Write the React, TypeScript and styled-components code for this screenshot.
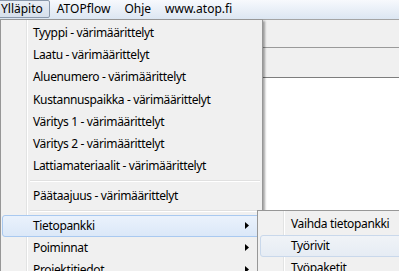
import styled, { createGlobalStyle } from 'styled-components';

const GlobalStyle = createGlobalStyle`
  html, body {
    margin: 0;
    padding: 0;
    background: #ffffff;
  }
  body {
    font-family: 'Noto Sans', 'DejaVu Sans', sans-serif;
    font-size: 12px;
    letter-spacing: -0.35px;
    color: #000;
  }
`;

type MenuEntry = { label?: string; sep?: boolean; sub?: boolean; active?: boolean };

const mainItems: MenuEntry[] = [
  { label: 'Tyyppi - värimäärittelyt' },
  { label: 'Laatu - värimäärittelyt' },
  { label: 'Aluenumero - värimäärittelyt' },
  { label: 'Kustannuspaikka - värimäärittelyt' },
  { label: 'Väritys 1 - värimäärittelyt' },
  { label: 'Väritys 2 - värimäärittelyt' },
  { label: 'Lattiamateriaalit - värimäärittelyt' },
  { sep: true },
  { label: 'Päätaajuus - värimäärittelyt' },
  { sep: true },
  { label: 'Tietopankki', sub: true, active: true },
  { label: 'Poiminnat', sub: true },
  { label: 'Projektitiedot', sub: true },
];

const subItems: MenuEntry[] = [
  { label: 'Vaihda tietopankki' },
  { label: 'Työrivit', active: true },
  { label: 'Työpaketit' },
];

const barItems = ['Ylläpito', 'ATOPflow', 'Ohje', 'www.atop.fi'];

const Arrow = () => (
  <svg width="4" height="7" viewBox="0 0 4 7">
    <polygon points="0,0 4,3.5 0,7" fill="#000" />
  </svg>
);

export default function App() {
  return (
    <Screen>
      <GlobalStyle />
      <MenuBar>
        {barItems.map((b, i) => (
          <BarItem key={b} $pressed={i === 0}>
            {b}
          </BarItem>
        ))}
      </MenuBar>
      <Band $h={27} $line="#a4a4a4" />
      <Band $h={29} $line="#9a9a9a" />
      <WorkArea />

      <MainMenu>
        {mainItems.map((m, i) =>
          m.sep ? (
            <Separator key={i} />
          ) : (
            <Item key={i} $active={m.active}>
              <Label>{m.label}</Label>
              {m.sub && (
                <ArrowBox>
                  <Arrow />
                </ArrowBox>
              )}
            </Item>
          )
        )}
      </MainMenu>

      <SubMenu>
        {subItems.map((m) => (
          <Item key={m.label} $soft={m.active}>
            <Label>{m.label}</Label>
          </Item>
        ))}
      </SubMenu>
    </Screen>
  );
}

const Screen = styled.div`
  position: relative;
  width: 399px;
  height: 271px;
  overflow: hidden;
  display: flex;
  flex-direction: column;
  background: #fff;
`;

const MenuBar = styled.div`
  height: 19px;
  flex-shrink: 0;
  display: flex;
  align-items: stretch;
  margin-left: -6px;
  letter-spacing: 0;
  background: linear-gradient(#f7f9fd, #dce6f2);
`;

const BarItem = styled.div<{ $pressed?: boolean }>`
  display: flex;
  align-items: center;
  padding: 0 6px 1px;
  height: 18px;
  box-sizing: border-box;
  border: 1px solid ${(p) => (p.$pressed ? '#8a98ab' : 'transparent')};
  border-radius: 2px;
  background: ${(p) => (p.$pressed ? 'linear-gradient(#e9eef5, #d6dfeb)' : 'transparent')};
`;

const Band = styled.div<{ $h: number; $line: string }>`
  height: ${(p) => p.$h}px;
  flex-shrink: 0;
  background: #f0f0f0;
  border-top: 1px solid ${(p) => p.$line};
`;

const WorkArea = styled.div`
  flex: 1;
  background: #ffffff;
  border-top: 1px solid #7d7d7d;
`;

const MenuBase = styled.div`
  position: absolute;
  box-sizing: border-box;
  border: 1px solid #979797;
  padding: 2px 2px;
  background: linear-gradient(
    to right,
    #f1f1f1 25px,
    #e2e3e3 25px,
    #e2e3e3 26px,
    #ffffff 26px,
    #ffffff 27px,
    #f0f0f0 27px
  );
  box-shadow: 2px 2px 2px rgba(0, 0, 0, 0.35);
`;

const MainMenu = styled(MenuBase)`
  left: 0;
  top: 19px;
  width: 263px;
  height: 290px;
  padding-left: 1px;
`;

const SubMenu = styled(MenuBase)`
  left: 257px;
  top: 210px;
  width: 170px;
  height: 90px;
`;

const Item = styled.div<{ $active?: boolean; $soft?: boolean }>`
  height: 22.2px;
  flex-shrink: 0;
  box-sizing: border-box;
  display: flex;
  align-items: center;
  padding-left: 30px;
  padding-bottom: 1px;
  border: 1px solid transparent;
  border-radius: 3px;
  ${(p) =>
    p.$active &&
    `
    border-color: #a9c9f0;
    background: linear-gradient(#eaf2fc, #dbe8f8);
  `}
  ${(p) =>
    p.$soft &&
    `
    border-color: #c9d8eb;
    background: linear-gradient(#f0f3f7, #e6ecf4);
  `}
`;

const Label = styled.span`
  flex: 1;
  white-space: nowrap;
`;

const ArrowBox = styled.span`
  display: flex;
  width: 13px;
  padding-right: 1px;
`;

const Separator = styled.div`
  height: 7.5px;
  display: flex;
  align-items: center;
  padding-left: 28px;
  &::after {
    content: '';
    flex: 1;
    height: 0;
    border-top: 1px solid #e0e0e0;
    border-bottom: 1px solid #ffffff;
  }
`;
